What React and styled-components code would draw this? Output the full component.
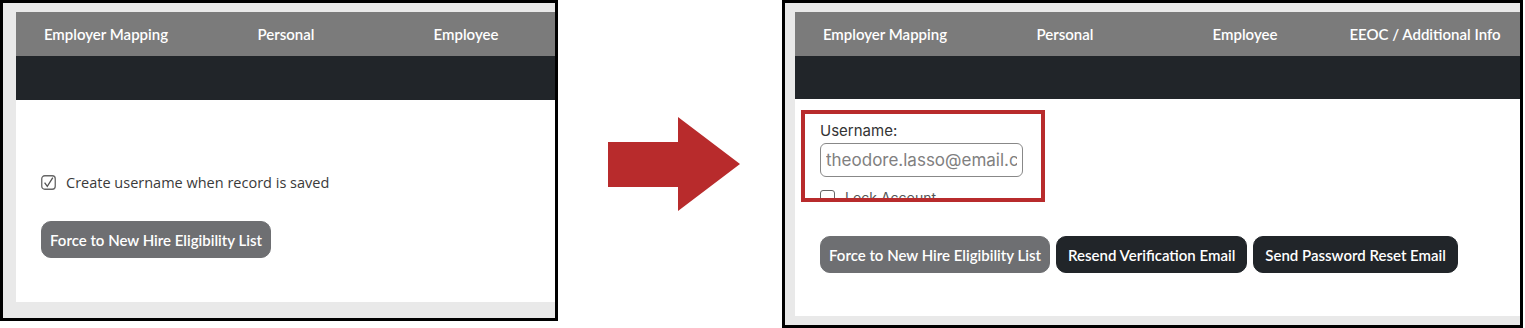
import React from "react";
import styled, { createGlobalStyle } from "styled-components";

const GlobalStyle = createGlobalStyle`
  html, body {
    margin: 0;
    padding: 0;
    background: #ffffff;
    font-family: "Lato", "Open Sans", sans-serif;
  }
`;

const tabs = ["Employer Mapping", "Personal", "Employee", "EEOC / Additional Info"];

const Tabs = ({ count }) => (
  <TabBar>
    {tabs.slice(0, count).map((t) => (
      <Tab key={t}>{t}</Tab>
    ))}
  </TabBar>
);

const Arrow = () => (
  <ArrowWrap>
    <svg width="132" height="94" viewBox="0 0 132 94">
      <polygon points="0,25 70,25 70,0 132,47 70,94 70,70 0,70" fill="#b82b2c" />
    </svg>
  </ArrowWrap>
);

const TickBox = () => (
  <svg width="15" height="15" viewBox="0 0 15 15">
    <rect x="0.75" y="0.75" width="13.5" height="13.5" rx="3" fill="none" stroke="#666" strokeWidth="1.3" />
    <path d="M3.6 7.6 L6.3 11.4 L11.8 2.6" fill="none" stroke="#555" strokeWidth="1.3" />
  </svg>
);

const App = () => {
  return (
    <>
      <GlobalStyle />
      <Stage>
        <Panel $width={558} $height={321} $padLeft={13} $padBottom={16}>
          <Tabs count={3} />
          <DarkBar $height={44} />
          <Body $height={202}>
            <CheckRow>
              <TickBox />
              <span>Create username when record is saved</span>
            </CheckRow>
            <ButtonRow $top={30} $left={25}>
              <Button $variant="grey">Force to New Hire Eligibility List</Button>
            </ButtonRow>
          </Body>
        </Panel>
        <Arrow />
        <Panel $width={741} $height={328} $padLeft={10} $padBottom={9}>
          <Tabs count={4} />
          <DarkBar $height={43} />
          <Body $height={217} $padTop={11}>
            <Highlight>
              <FieldLabel>Username:</FieldLabel>
              <TextInput placeholder="theodore.lasso@email.com" />
              <LockRow>
                <EmptyBox />
                <span>Lock Account</span>
              </LockRow>
            </Highlight>
            <ButtonRow $top={34} $left={25}>
              <Button $variant="grey">Force to New Hire Eligibility List</Button>
              <Button $variant="dark" $pad={11}>Resend Verification Email</Button>
              <Button $variant="dark" $pad={11}>Send Password Reset Email</Button>
            </ButtonRow>
          </Body>
        </Panel>
      </Stage>
    </>
  );
};

export default App;

const Stage = styled.div`
  display: flex;
  align-items: flex-start;
  width: 1525px;
  height: 328px;
`;

const Panel = styled.div`
  box-sizing: border-box;
  width: ${(p) => p.$width}px;
  height: ${(p) => p.$height}px;
  border: 3px solid #000;
  background: #e9e9e9;
  padding: 9px 0 ${(p) => p.$padBottom}px ${(p) => p.$padLeft}px;
  display: flex;
  flex-direction: column;
  overflow: hidden;
`;

const TabBar = styled.div`
  display: flex;
  height: 44px;
  background: #7b7b7b;
  align-items: center;
  flex-shrink: 0;
`;

const Tab = styled.div`
  flex: 0 0 180px;
  text-align: center;
  color: #ffffff;
  font-size: 15px;
  font-weight: 600;
  white-space: nowrap;
`;

const DarkBar = styled.div`
  height: ${(p) => p.$height}px;
  background: #212529;
  flex-shrink: 0;
`;

const Body = styled.div`
  height: ${(p) => p.$height}px;
  background: #ffffff;
  box-sizing: border-box;
  padding-top: ${(p) => p.$padTop || 0}px;
  flex-shrink: 0;
`;

const CheckRow = styled.div`
  display: flex;
  align-items: center;
  gap: 10px;
  margin: 73px 0 0 25px;
  height: 18px;
  font-family: "Open Sans", sans-serif;
  font-size: 14.5px;
  color: #3a3a3a;
`;

const ButtonRow = styled.div`
  display: flex;
  gap: 6px;
  margin: ${(p) => p.$top}px 0 0 ${(p) => p.$left}px;
`;

const Button = styled.button`
  height: 37px;
  padding: 0 ${(p) => p.$pad || 8}px;
  border: 1px solid ${(p) => (p.$variant === "dark" ? "#212529" : "#6e6f72")};
  border-radius: 10px;
  background: ${(p) => (p.$variant === "dark" ? "#212529" : "#6e6f72")};
  color: #ffffff;
  font-family: "Lato", sans-serif;
  font-size: 15px;
  font-weight: 600;
  white-space: nowrap;
`;

const ArrowWrap = styled.div`
  margin: 117px 42px 0 50px;
  line-height: 0;
`;

const Highlight = styled.div`
  box-sizing: border-box;
  width: 244px;
  height: 92px;
  margin-left: 6px;
  border: 4px solid #b82b2c;
  padding: 8px 0 0 15px;
  overflow: hidden;
  font-family: "Inter", sans-serif;
`;

const FieldLabel = styled.div`
  font-size: 15px;
  color: #333;
  line-height: 18px;
`;

const TextInput = styled.input`
  box-sizing: border-box;
  display: block;
  margin-top: 3px;
  width: 203px;
  height: 34px;
  padding: 0 5px;
  border: 1px solid #888;
  border-radius: 6px;
  font-family: "Inter", sans-serif;
  font-size: 17px;
  outline: none;
  &::placeholder {
    color: #808080;
  }
`;

const LockRow = styled.div`
  display: flex;
  align-items: center;
  gap: 10px;
  margin-top: 12px;
  font-size: 14px;
  color: #555;
`;

const EmptyBox = styled.span`
  width: 13px;
  height: 13px;
  border: 1px solid #666;
  border-radius: 3px;
`;
